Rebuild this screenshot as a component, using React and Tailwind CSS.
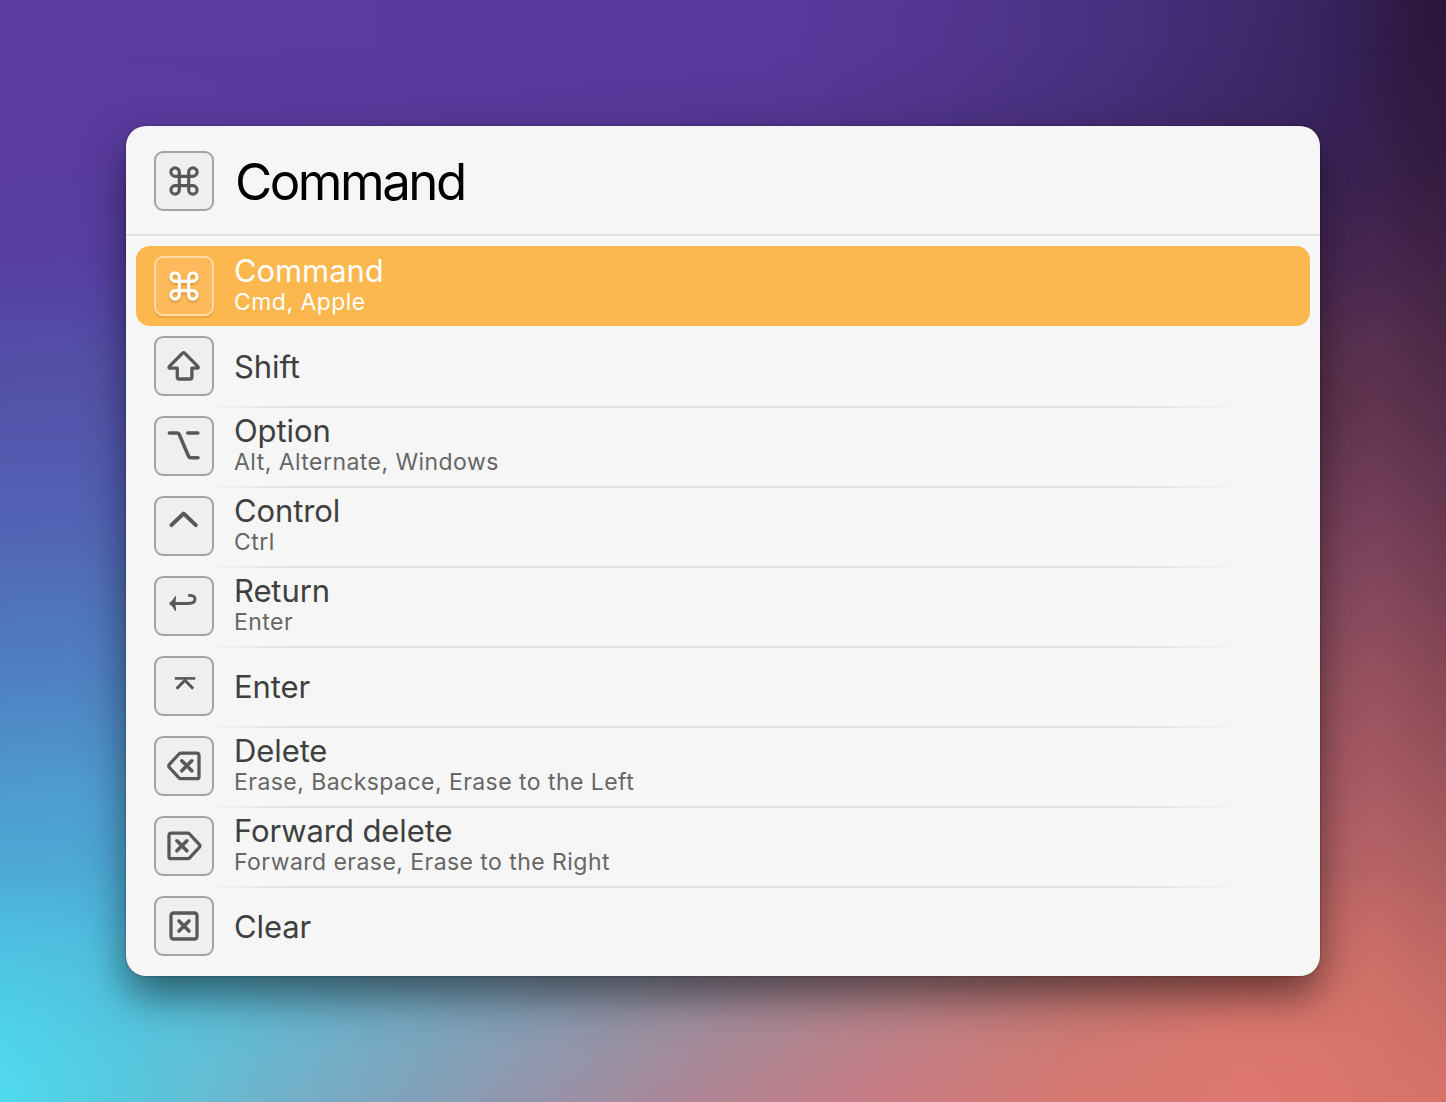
const icons = {
  command: (
    <path
      d="M25.300 20.500v19M34.700 20.500v19M20.500 25.300h19M20.500 34.700h19M25.300 25.300v-4.300a4.200 4.200 0 0 0-8.400 0 4.300 4.300 0 0 0 4.200 4.300ZM34.700 25.300v-4.300a4.200 4.200 0 0 1 8.400 0 4.300 4.300 0 0 1-4.200 4.300ZM25.300 34.700v4.300a4.200 4.200 0 0 1-8.400 0 4.300 4.300 0 0 1 4.200-4.300ZM34.700 34.700v4.300a4.200 4.200 0 0 0 8.400 0 4.300 4.300 0 0 0-4.200-4.300Z"
      strokeWidth="3.200"
      strokeLinecap="butt"
    />
  ),
  shift: (
    <path d="M28.600 17.100a1.400 1.400 0 0 1 2 0L43.800 30.400q1.200 1.700-.6 1.700h-5.300v9.200q0 1.700-1.700 1.700H25q-1.700 0-1.700-1.700v-9.200H16q-1.800 0-.6-1.700Z" strokeWidth="3.300" />
  ),
  option: <path d="M15.400 17h7.600q1.500 0 2.200 1.400l9.400 22q.7 1.400 2.200 1.400h7.200M33.800 17h10" />,
  control: <path d="M17.400 29.200 29.600 17.500 41.800 29.200" strokeWidth="3.900" />,
  ret: (
    <>
      <path d="M18 27.500h16.500q6.500 0 6.500-4.500 0-3.600-5.700-3.600" strokeWidth="2.900" />
      <path d="M15.800 27.500c2.300-1.600 4.300-3.800 5.600-6.500l-.6 5.100.6 1.400-.6 1.400.6 5.300c-1.300-2.900-3.300-5.100-5.600-6.700Z" fill="currentColor" strokeWidth="1.400" />
    </>
  ),
  enter: (
    <>
      <path d="M20.800 22.400h20.400" strokeWidth="2.600" strokeLinecap="butt" />
      <path d="M22.600 32.800 30.900 24.300l8.300 8.500" strokeWidth="3" strokeLinecap="butt" />
    </>
  ),
  del: (
    <>
      <path d="M27 17.100h15.700q2.300 0 2.300 2.300v21q0 2.300-2.300 2.300H27q-1.200 0-2-.9l-9.600-10.300q-1.300-1.600 0-3.200L25 18q.8-.9 2-.9Z" strokeWidth="3.300" />
      <path d="m27.800 24.800 10 10m0-10-10 10" />
    </>
  ),
  forward: (
    <>
      <path d="M17.300 17.100h16.300q1.200 0 2 .9l9.600 10.300q1.300 1.600 0 3.200l-9.600 10.300q-.8.900-2 .9H17.300q-2.300 0-2.300-2.300v-21q0-2.300 2.300-2.300Z" strokeWidth="3.300" />
      <path d="m22.900 24.800 10 10m0-10-10 10" />
    </>
  ),
  clear: (
    <>
      <rect x="17" y="17" width="26" height="26" rx="2.500" strokeWidth="3.300" />
      <path d="m25 25 10 10m0-10-10 10" />
    </>
  ),
};

const rows = [
  { icon: "command", title: "Command", sub: "Cmd, Apple" },
  { icon: "shift", title: "Shift" },
  { icon: "option", title: "Option", sub: "Alt, Alternate, Windows" },
  { icon: "control", title: "Control", sub: "Ctrl" },
  { icon: "ret", title: "Return", sub: "Enter" },
  { icon: "enter", title: "Enter" },
  { icon: "del", title: "Delete", sub: "Erase, Backspace, Erase to the Left" },
  { icon: "forward", title: "Forward delete", sub: "Forward erase, Erase to the Right" },
  { icon: "clear", title: "Clear" },
];

function Key({ name, active }) {
  const tone = active
    ? "border-[#fedba7] bg-[#fdb95a] text-white shadow-[0_2px_2px_rgba(150,90,0,0.2)]"
    : "border-[#a3a3a3] bg-[#efefef] text-[#585858]";
  return (
    <span className={`flex size-[60px] shrink-0 rounded-[9px] border-2 ${tone}`}>
      <svg
        viewBox="0 0 60 60"
        className={`-m-0.5 size-[60px] shrink-0 ${active ? "drop-shadow-[0_2px_1px_rgba(150,90,0,0.35)]" : ""}`}
        fill="none"
        stroke="currentColor"
        strokeWidth="3.600"
        strokeLinecap="round"
        strokeLinejoin="round"
      >
        {icons[name]}
      </svg>
    </span>
  );
}

function Row({ item, active, divider }) {
  return (
    <li
      className={`relative flex h-20 items-center gap-5 rounded-[14px] px-[18px] ${
        active ? "bg-[#fcb84e] text-white" : "text-[#3f3f3f]"
      }`}
    >
      <Key name={item.icon} active={active} />
      <div className={`flex flex-col whitespace-nowrap ${item.sub ? "pb-1" : "pt-0.5"}`}>
        <span className="text-[31px] leading-9 tracking-[-0.1px]">{item.title}</span>
        {item.sub && (
          <span className={`text-[23px] leading-[26px] tracking-[0.45px] ${active ? "text-white" : "text-[#666666]"}`}>
            {item.sub}
          </span>
        )}
      </div>
      {divider && (
        <span className="absolute bottom-[-2px] left-[68px] h-0.5 w-[1040px] bg-[linear-gradient(to_right,transparent,#e2e2e2_8%,#e2e2e2_90%,transparent)]" />
      )}
    </li>
  );
}

function Wallpaper() {
  return (
    <div className="absolute inset-0 -z-10 bg-[linear-gradient(177deg,#5b3b9f_0%,#5a3ca0_12%,#5541a2_22%,#5450a8_32%,#5262b4_44%,#4f7fc2_57%,#4e9dd0_68%,#4db0da_78%,#4dc4e2_89%,#4fdbee_100%)]">
      <div className="absolute inset-0 bg-[linear-gradient(172deg,#33204f_0%,#3a2458_12%,#40265a_22%,#532d55_36%,#643650_46%,#804660_57%,#9a5462_67%,#b56268_79%,#cc7068_90%,#dc766e_100%)] [mask-image:linear-gradient(to_right,transparent_15%,black_85%)]" />
      <div className="absolute inset-x-0 bottom-0 h-[260px] bg-[linear-gradient(92deg,#4fdbee_0%,#57c8de_9%,#72b0c8_20%,#849fb8_30%,#9a90a6_40%,#b08494_49%,#c67c86_60%,#d4766f_74%,#de7870_86%,#d87368_100%)] [mask-image:linear-gradient(to_bottom,transparent_10%,black_100%)]" />
      <div className="absolute inset-x-0 top-0 h-[330px] bg-[linear-gradient(97deg,#5b3b9f_0%,#5a3a9e_52%,#533692_63%,#48307f_75%,#3f2a6c_84%,#37225c_91%,#2f1a46_97%,#2b163a_100%)] [mask-image:linear-gradient(to_bottom,black_15%,transparent)]" />
      <div className="absolute inset-y-0 right-0 w-32 bg-[linear-gradient(to_bottom,#2c163a_0%,#351c40_16%,#472646_28%,#542d4a_36%,#62354e_44%,#7c4254_56%,#945058_68%,#b06060_80%,#c66c66_90%,#d87369_100%)] [mask-image:linear-gradient(to_right,transparent,rgba(0,0,0,0.25)_50%,black)]" />
    </div>
  );
}

export default function App() {
  return (
    <main className="relative isolate flex h-[1102px] w-[1446px] flex-col overflow-hidden px-[126px] pt-[126px] font-['Inter',sans-serif]">
      <Wallpaper />
      <section className="flex h-[850px] flex-col rounded-[20px] bg-[#f6f6f6] shadow-[0_0_2px_rgba(0,0,0,0.5),0_20px_40px_rgba(0,0,0,0.5)]">
        <header className="flex h-[110px] items-center gap-[21px] border-b-2 border-[#e2e2e2] px-7 pt-0.5">
          <Key name="command" />
          <h1 className="pt-px text-[51px] leading-none tracking-[-2.500px] text-black">Command</h1>
        </header>
        <ul className="px-2.5 pt-2.5">
          {rows.map((item, i) => (
            <Row key={item.title} item={item} active={i === 0} divider={i > 0 && i < rows.length - 1} />
          ))}
        </ul>
      </section>
    </main>
  );
}
